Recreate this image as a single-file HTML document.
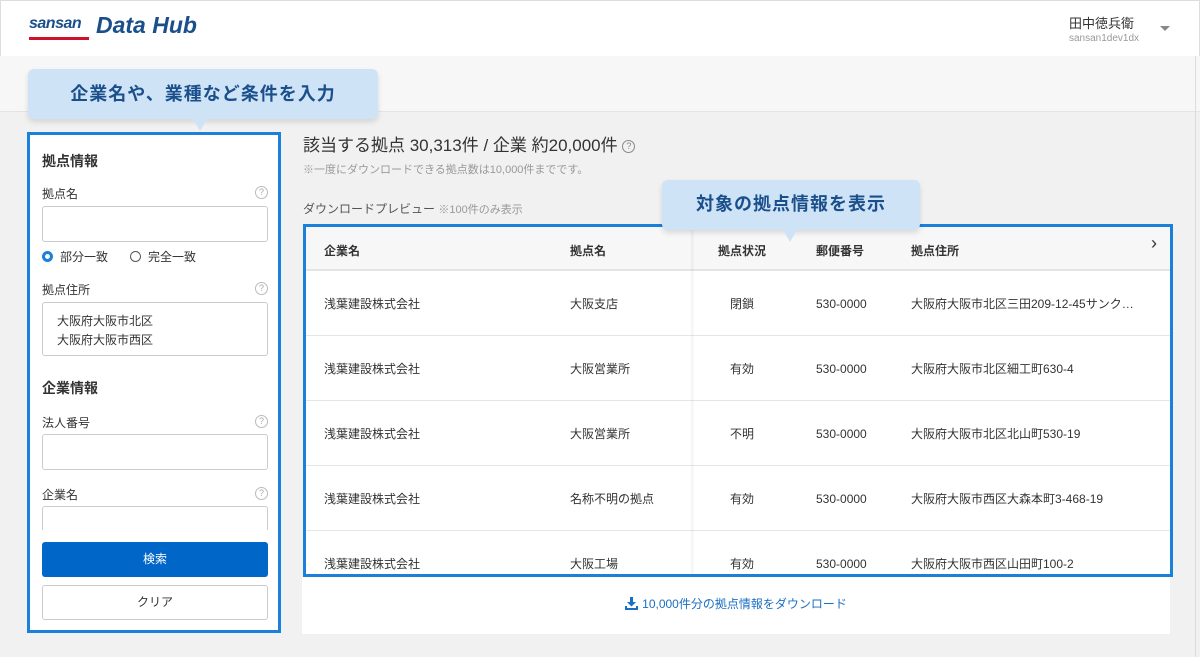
<!DOCTYPE html>
<html><head><meta charset="utf-8"><style>
*{box-sizing:border-box;margin:0;padding:0}
body{width:1200px;height:657px;overflow:hidden;background:#f1f1f1;font-family:"Liberation Sans","Noto Sans CJK JP",sans-serif;color:#333;position:relative}
.abs{position:absolute}
.hdr{left:0;top:0;width:1200px;height:56px;background:#fff;border:1px solid #ddd;border-bottom:none}
.band{left:0;top:56px;width:1200px;height:56px;background:#f7f7f7;border-bottom:1px solid #e4e4e4}
.panel{left:27px;top:132px;width:254px;height:501px;background:#fff;border:3px solid #1a80d9}
.lbl{font-size:12px;color:#333;line-height:14px}
.h{font-size:14px;font-weight:bold;color:#333}
.inp{left:12px;width:226px;border:1px solid #ccc;border-radius:3px;background:#fff}
.q{width:13px;height:13px;border:1px solid #bbb;border-radius:50%;font-size:9px;color:#aaa;text-align:center;line-height:11px}
.tip{background:#cfe3f6;border-radius:6px;color:#1b4f8c;font-weight:bold;font-size:18px;text-align:center;box-shadow:0 3px 6px rgba(0,0,0,.12);letter-spacing:1px}
.tip:after{content:"";position:absolute;left:var(--ax);bottom:-12px;border-left:7px solid transparent;border-right:7px solid transparent;border-top:12px solid #cfe3f6}
.tbl{left:303px;top:224px;width:870px;height:353px;border:3px solid #1a80d9;background:#fff;overflow:hidden}
.row{position:absolute;left:0;width:864px;height:65px;border-bottom:1px solid #e6e6e6;font-size:12px;color:#333}
.row span{position:absolute;top:25px;line-height:16px}
</style></head><body>
<div class="abs hdr"></div>
<div class="abs" style="left:29px;top:15px;font-size:16px;font-weight:bold;font-style:italic;color:#1a4f8c;letter-spacing:-0.5px">sansan</div>
<div class="abs" style="left:29px;top:37px;width:60px;height:3px;background:#d0112b"></div>
<div class="abs" style="left:96px;top:12px;font-size:23px;font-weight:bold;font-style:italic;color:#1a4f8c">Data Hub</div>
<div class="abs" style="left:1069px;top:13px;font-size:13px;color:#333">田中徳兵衛</div>
<div class="abs" style="left:1069px;top:33px;font-size:10px;color:#999">sansan1dev1dx</div>
<div class="abs" style="left:1160px;top:26px;border-left:5px solid transparent;border-right:5px solid transparent;border-top:5px solid #888"></div>
<div class="abs band"></div>
<div class="abs" style="left:1195px;top:56px;width:1px;height:601px;background:#ddd"></div>

<div class="abs panel">
 <div class="abs h" style="left:12px;top:16px">拠点情報</div>
 <div class="abs lbl" style="left:12px;top:52px">拠点名</div>
 <div class="abs q" style="left:225px;top:51px">?</div>
 <div class="abs inp" style="top:71px;height:36px"></div>
 <div class="abs" style="left:12px;top:116px;width:11px;height:11px;border-radius:50%;border:3px solid #1a80d9;background:#fff"></div>
 <div class="abs lbl" style="left:30px;top:115px">部分一致</div>
 <div class="abs" style="left:100px;top:116px;width:11px;height:11px;border-radius:50%;border:1px solid #555"></div>
 <div class="abs lbl" style="left:118px;top:115px">完全一致</div>
 <div class="abs lbl" style="left:12px;top:148px">拠点住所</div>
 <div class="abs q" style="left:225px;top:147px">?</div>
 <div class="abs inp" style="top:167px;height:54px;padding:9px 0 0 14px;font-size:12px;line-height:19px">大阪府大阪市北区<br>大阪府大阪市西区</div>
 <div class="abs h" style="left:12px;top:243px">企業情報</div>
 <div class="abs lbl" style="left:12px;top:281px">法人番号</div>
 <div class="abs q" style="left:225px;top:280px">?</div>
 <div class="abs inp" style="top:299px;height:36px"></div>
 <div class="abs lbl" style="left:12px;top:353px">企業名</div>
 <div class="abs q" style="left:225px;top:352px">?</div>
 <div class="abs inp" style="top:371px;height:24px;border-bottom:none;border-radius:3px 3px 0 0"></div>
 <div class="abs" style="left:12px;top:407px;width:226px;height:35px;background:#0066c8;border-radius:3px;color:#fff;font-size:12px;text-align:center;line-height:35px">検索</div>
 <div class="abs" style="left:12px;top:450px;width:226px;height:35px;background:#fff;border:1px solid #ccc;border-radius:3px;font-size:12px;text-align:center;line-height:33px">クリア</div>
</div>
<div class="abs tip" style="left:28px;top:69px;width:350px;height:50px;line-height:50px;--ax:165px">企業名や、業種など条件を入力</div>

<div class="abs" style="left:303px;top:131px;font-size:17px;color:#333">該当する拠点 30,313件 / 企業 約20,000件 <span style="display:inline-block;width:13px;height:13px;border:1px solid #888;border-radius:50%;font-size:9px;line-height:11px;text-align:center;vertical-align:2px;color:#888">?</span></div>
<div class="abs" style="left:303px;top:161px;font-size:11px;color:#999">※一度にダウンロードできる拠点数は10,000件までです。</div>
<div class="abs" style="left:303px;top:200px;font-size:12px;color:#555">ダウンロードプレビュー <span style="font-size:11px;color:#999">※100件のみ表示</span></div>

<div class="abs tbl">
 <div class="abs" style="left:0;top:0;width:864px;height:44px;background:#f7f7f7;border-bottom:2px solid #e4e4e4;font-size:12px;font-weight:bold">
  <span class="abs" style="left:18px;top:15px">企業名</span>
  <span class="abs" style="left:264px;top:15px">拠点名</span>
  <span class="abs" style="left:412px;top:15px">拠点状況</span>
  <span class="abs" style="left:510px;top:15px">郵便番号</span>
  <span class="abs" style="left:605px;top:15px">拠点住所</span>
  <span class="abs" style="left:845px;top:6px;font-size:18px;font-weight:normal">›</span>
 </div>
 <div class="row" style="top:44px"><span style="left:18px">浅葉建設株式会社</span><span style="left:264px">大阪支店</span><span style="left:424px">閉鎖</span><span style="left:510px">530-0000</span><span style="left:605px">大阪府大阪市北区三田209-12-45サンク…</span></div>
 <div class="row" style="top:109px"><span style="left:18px">浅葉建設株式会社</span><span style="left:264px">大阪営業所</span><span style="left:424px">有効</span><span style="left:510px">530-0000</span><span style="left:605px">大阪府大阪市北区細工町630-4</span></div>
 <div class="row" style="top:174px"><span style="left:18px">浅葉建設株式会社</span><span style="left:264px">大阪営業所</span><span style="left:424px">不明</span><span style="left:510px">530-0000</span><span style="left:605px">大阪府大阪市北区北山町530-19</span></div>
 <div class="row" style="top:239px"><span style="left:18px">浅葉建設株式会社</span><span style="left:264px">名称不明の拠点</span><span style="left:424px">有効</span><span style="left:510px">530-0000</span><span style="left:605px">大阪府大阪市西区大森本町3-468-19</span></div>
 <div class="row" style="top:304px"><span style="left:18px">浅葉建設株式会社</span><span style="left:264px">大阪工場</span><span style="left:424px">有効</span><span style="left:510px">530-0000</span><span style="left:605px">大阪府大阪市西区山田町100-2</span></div>
 <div class="abs" style="left:385px;top:0;width:4px;height:353px;background:linear-gradient(90deg,rgba(0,0,0,.05),rgba(0,0,0,0))"></div>
</div>
<div class="abs" style="left:302px;top:577px;width:868px;height:57px;background:#fff;text-align:center;font-size:12px;color:#1a6fc4;line-height:55px">
 <svg width="13" height="13" viewBox="0 0 13 13" style="vertical-align:-2px;margin-right:4px"><path d="M5 0h3v5h3l-4.5 4.5L2 5h3z" fill="#1a6fc4"/><path d="M0 9h2v2h9V9h2v4H0z" fill="#1a6fc4"/></svg>10,000件分の拠点情報をダウンロード
</div>
<div class="abs tip" style="left:662px;top:180px;width:258px;height:50px;line-height:48px;--ax:121px">対象の拠点情報を表示</div>
</body></html>
